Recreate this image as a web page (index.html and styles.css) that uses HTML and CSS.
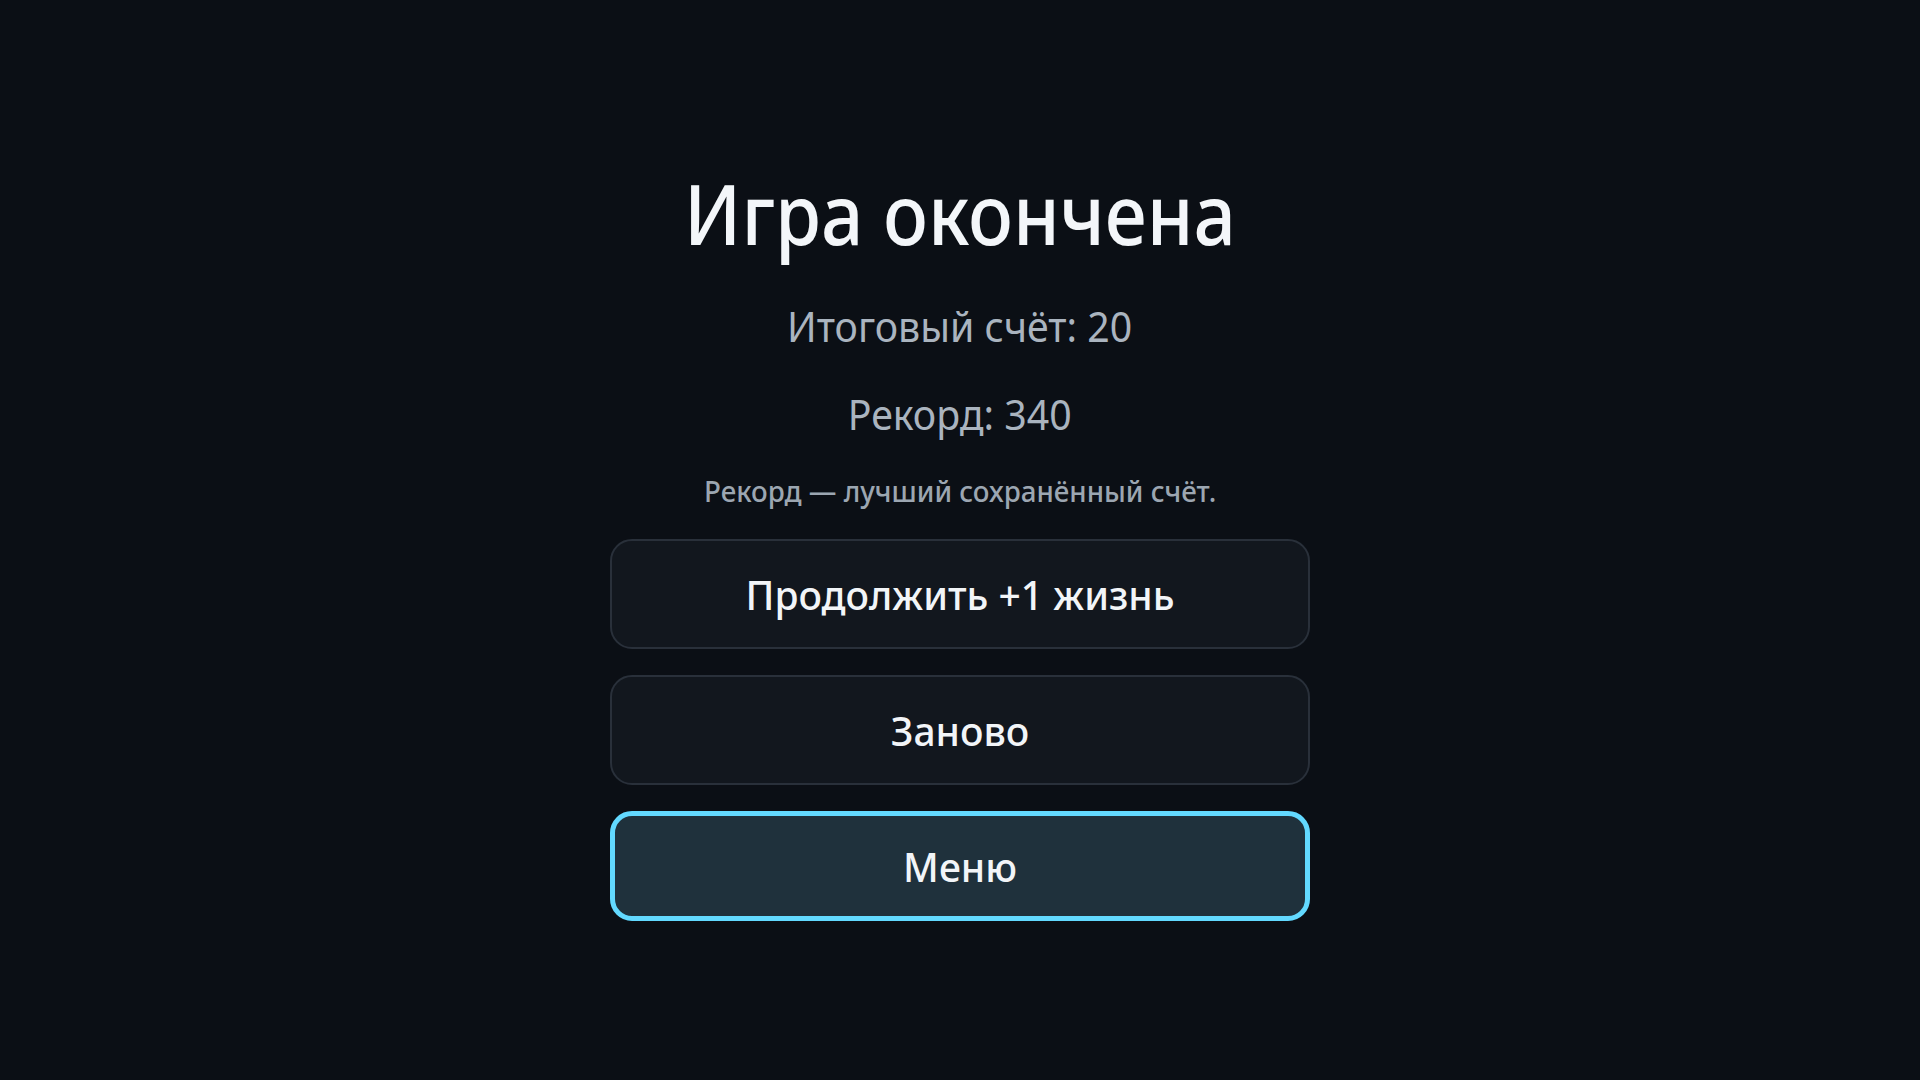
FILE: index.html
```html
<!DOCTYPE html>
<html lang="ru">
<head>
<meta charset="utf-8">
<title>Игра окончена</title>
<link rel="stylesheet" href="styles.css">
</head>
<body>
<main class="screen">
  <h1 class="title">Игра окончена</h1>
  <p class="score">Итоговый счёт: 20</p>
  <p class="score record">Рекорд: 340</p>
  <p class="note">Рекорд — лучший сохранённый счёт.</p>
  <div class="actions">
    <button class="btn">Продолжить +1 жизнь</button>
    <button class="btn">Заново</button>
    <button class="btn btn-focus">Меню</button>
  </div>
</main>
</body>
</html>
```

FILE: styles.css
```css
html, body {
  margin: 0;
  padding: 0;
  height: 100%;
  background: #0b0f15;
}
body {
  font-family: "Noto Sans", "Open Sans", sans-serif;
  color: #f2f5f8;
}
.screen {
  display: flex;
  flex-direction: column;
  align-items: center;
  padding-top: 163px;
}
.title {
  margin: 0;
  font-size: 84px;
  line-height: 100px;
  font-weight: 500;
  color: #f3f6f9;
  transform: scaleX(0.89);
}
.score {
  margin: 38px 0 0;
  font-size: 42px;
  line-height: 50px;
  color: #aab4bf;
  transform: scaleX(0.935);
}
.record {
  margin-top: 38px;
}
.note {
  margin: 34px 0 0;
  font-size: 29px;
  line-height: 36px;
  font-weight: 500;
  color: #9ca6b1;
  transform: scaleX(0.955);
}
.actions {
  margin-top: 30px;
  display: flex;
  flex-direction: column;
  gap: 26px;
  width: 700px;
}
.btn {
  box-sizing: border-box;
  height: 110px;
  border-radius: 22px;
  border: 2px solid #29303a;
  background: #12171e;
  color: #f2f5f8;
  font-family: inherit;
  font-size: 39px;
  font-weight: 500;
  padding: 0;
}
.btn-focus {
  border: 5px solid #62d9ff;
  background: #1f313c;
}
```
